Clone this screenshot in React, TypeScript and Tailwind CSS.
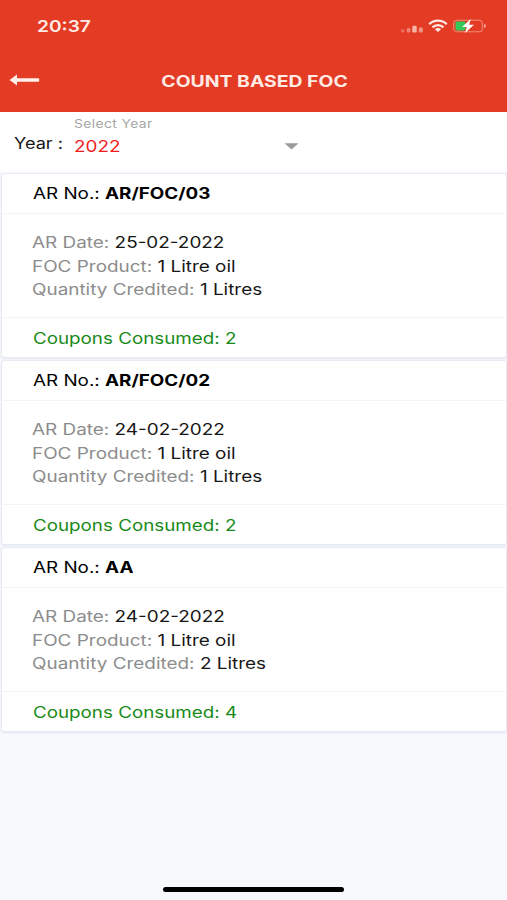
import React from 'react';

interface Coupon {
  arNo: string;
  date: string;
  product: string;
  quantity: string;
  consumed: number;
}

const coupons: Coupon[] = [
  { arNo: 'AR/FOC/03', date: '25-02-2022', product: '1 Litre oil', quantity: '1 Litres', consumed: 2 },
  { arNo: 'AR/FOC/02', date: '24-02-2022', product: '1 Litre oil', quantity: '1 Litres', consumed: 2 },
  { arNo: 'AA', date: '24-02-2022', product: '1 Litre oil', quantity: '2 Litres', consumed: 4 },
];

const StatusBar: React.FC = () => (
  <div className="h-[52px] flex items-center justify-between pl-[37px] pr-[20px] text-[#ffeae4]">
    <span className="origin-left scale-x-[1.16] text-[16.5px] font-semibold leading-none">20:37</span>
    <div className="flex items-center">
      <svg width="24" height="10" viewBox="0 0 24 10" className="mt-[3px] mr-[4px]" fill="currentColor">
        <rect x="1" y="6.3" width="3.4" height="3.2" rx="1.2" opacity="0.3" />
        <rect x="6.8" y="5" width="3.6" height="4.5" rx="1.2" opacity="0.4" />
        <rect x="12.3" y="2.8" width="4.4" height="6.7" rx="1.2" opacity="0.7" />
        <rect x="18.8" y="4.6" width="4" height="4.9" rx="1.2" opacity="0.5" />
      </svg>
      <svg width="20" height="14" viewBox="0 0 20 14" className="mr-[5px]" fill="none" stroke="currentColor" strokeWidth="2.3">
        <path d="M1.2 5.2C6 0.5 14 0.5 18.8 5.2" />
        <path d="M4.5 8.4C7.6 5.4 12.4 5.4 15.5 8.4" />
        <path d="M10 12.9L6.9 10.2C8.7 8.7 11.3 8.7 13.1 10.2Z" fill="currentColor" stroke="none" />
      </svg>
      <svg width="34" height="14" viewBox="0 0 34 14" fill="none">
        <rect x="0.7" y="1.2" width="28.6" height="11.6" rx="3.4" stroke="#f08a76" strokeWidth="1.1" />
        <path d="M31 4.8C33.6 5.5 33.6 8.5 31 9.2Z" fill="#f6a08e" />
        <rect x="2.5" y="2.6" width="10" height="8.8" rx="1.6" fill="#34c759" />
        <path d="M17.8 0L9 8.1H13.8L12.1 14L21 5.8H16.1Z" fill="#fff" />
      </svg>
    </div>
  </div>
);

const Header: React.FC = () => (
  <header className="h-[112px] bg-[#e43b24]">
    <StatusBar />
    <div className="relative h-[60px] flex items-center justify-center pl-[2px]">
      <button className="absolute left-[9px] top-[22px]" aria-label="Back">
        <svg width="31" height="12" viewBox="0 0 31 12" fill="#fff0eb">
          <path d="M0.5 6L8 0.6V4.2H29.2C30 4.2 30.3 4.8 30.3 6C30.3 7.2 30 7.8 29.2 7.8H8V11.4Z" />
        </svg>
      </button>
      <h1 className="scale-x-[1.25] text-[15.5px] font-bold leading-none text-[#ffeae4] whitespace-nowrap">COUNT BASED FOC</h1>
    </div>
  </header>
);

const YearPicker: React.FC = () => (
  <div className="h-[60px] flex bg-white">
    <div className="w-[74px] pl-[14px] pt-[19px]">
      <span className="inline-block origin-left scale-x-[1.17] text-[15.5px] leading-5 whitespace-nowrap">Year :</span>
    </div>
    <div className="relative w-[226px] pt-[5px]">
      <div className="origin-left scale-x-[1.21] w-fit text-[11.5px] leading-[15px] tracking-[0.3px] text-[#a6a6a6]">Select Year</div>
      <div className="flex items-center justify-between pt-[4px]">
        <span className="origin-left scale-x-[1.18] text-[16px] leading-5 text-[#f01c1c]">2022</span>
        <svg width="15" height="7" viewBox="0 0 15 7" className="mr-px" fill="#9b9b9b">
          <path d="M0.5 0.3H14.5L7.5 6.6Z" />
        </svg>
      </div>
    </div>
  </div>
);

const Field: React.FC<{ label: string; value: string }> = ({ label, value }) => (
  <div className="w-fit origin-left scale-x-[1.22] whitespace-nowrap">
    <span className="text-[#8c8c8c]">{label}: </span>
    <span className="text-[#161616]">{value}</span>
  </div>
);

const CouponCard: React.FC<{ coupon: Coupon }> = ({ coupon }) => (
  <article className="h-[185px] rounded-[3px] border border-[#e9ebf4] bg-white shadow-[0_1px_2px_#e3e6f0] text-[15.5px]">
    <div className="h-[40px] flex items-center pt-px pl-[31px] border-b border-[#f3f4f8]">
      <div className="origin-left scale-x-[1.215] whitespace-nowrap text-black">
        AR No.: <b className="font-bold">{coupon.arNo}</b>
      </div>
    </div>
    <div className="h-[104px] pt-[17px] pl-[29.5px] leading-[23.6px] border-b border-[#f3f4f8]">
      <Field label="AR Date" value={coupon.date} />
      <Field label="FOC Product" value={coupon.product} />
      <Field label="Quantity Credited" value={coupon.quantity} />
    </div>
    <div className="h-[39px] flex items-center pt-[2px] pl-[31px] text-[#188a18]">
      <span className="origin-left scale-x-[1.212] whitespace-nowrap">Coupons Consumed: {coupon.consumed}</span>
    </div>
  </article>
);

export default function App() {
  return (
    <div className="h-[900px] w-[507px] flex flex-col overflow-hidden bg-[#f7f9fd] font-['Inter',sans-serif] text-[#161616]">
      <Header />
      <YearPicker />
      <main className="flex-1 flex flex-col gap-[2px] pl-px pt-px">
        {coupons.map((coupon) => (
          <CouponCard key={coupon.arNo} coupon={coupon} />
        ))}
      </main>
      <div className="mx-auto mb-[8px] h-[5px] w-[181px] rounded-full bg-black" />
    </div>
  );
}
